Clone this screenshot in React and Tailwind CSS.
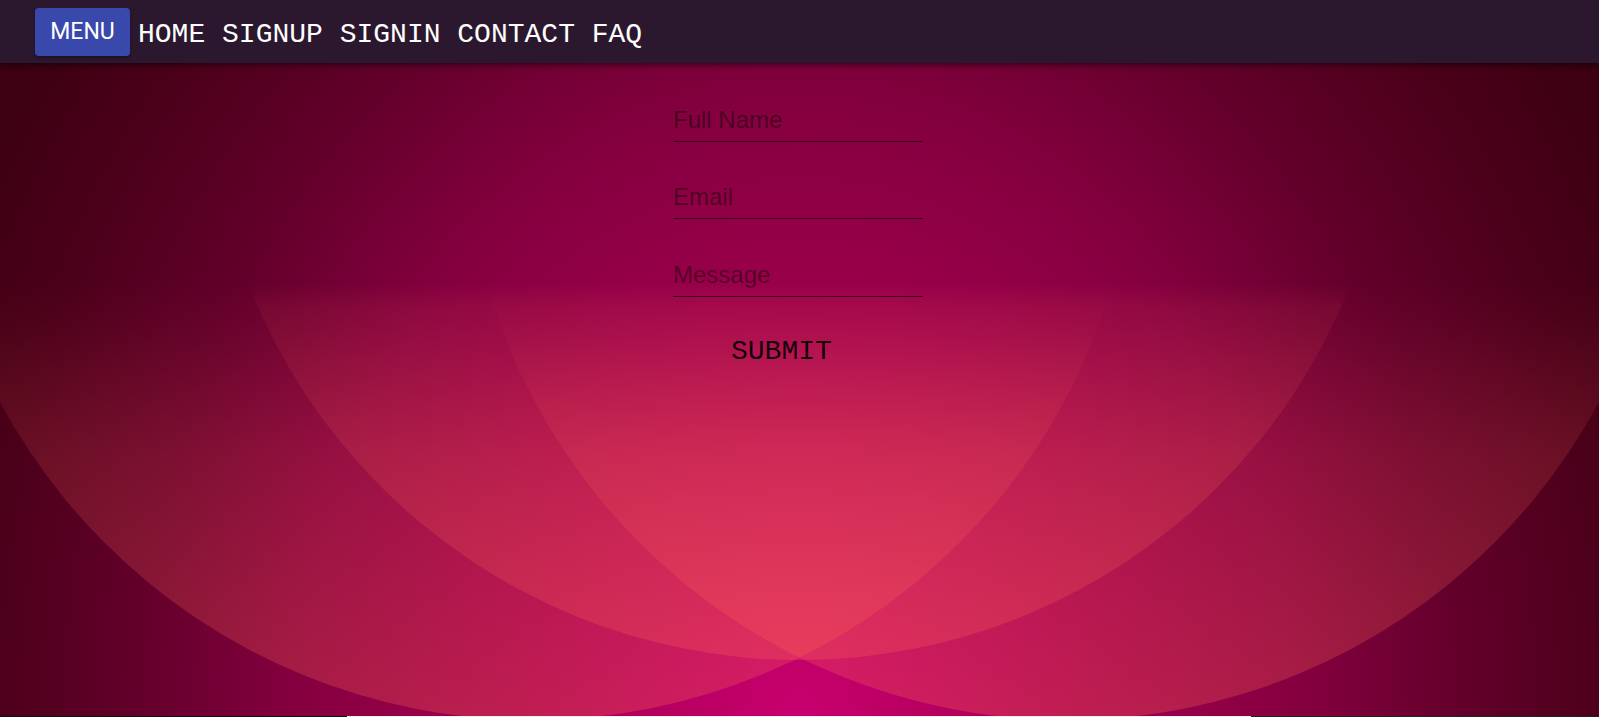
const links = ['HOME', 'SIGNUP', 'SIGNIN', 'CONTACT', 'FAQ'];

function Wallpaper() {
    return (
        <svg
            className="absolute inset-0 h-full w-full"
            viewBox="0 63 1599 653"
            preserveAspectRatio="none"
        >
            <defs>
                <radialGradient
                    id="base"
                    gradientUnits="userSpaceOnUse"
                    cx="0"
                    cy="0"
                    r="1"
                    gradientTransform="translate(799.5 717) scale(943 1150)"
                >
                    <stop offset="0" stopColor="#c8006e" />
                    <stop offset="0.313" stopColor="#a2004f" />
                    <stop offset="0.53" stopColor="#85003f" />
                    <stop offset="0.696" stopColor="#64002b" />
                    <stop offset="0.87" stopColor="#4a0019" />
                    <stop offset="1" stopColor="#3c0012" />
                </radialGradient>
                {/* middle circle fades in sharply, side circles softly */}
                <linearGradient id="glowMid" gradientUnits="userSpaceOnUse" x1="0" y1="285" x2="0" y2="717">
                    <stop offset="0" stopColor="#ff6455" stopOpacity="0" />
                    <stop offset="0.05" stopColor="#ff6455" stopOpacity="0.07" />
                    <stop offset="0.4" stopColor="#ff6455" stopOpacity="0.17" />
                    <stop offset="1" stopColor="#ff6455" stopOpacity="0.3" />
                </linearGradient>
                <linearGradient id="glowSide" gradientUnits="userSpaceOnUse" x1="0" y1="280" x2="0" y2="717">
                    <stop offset="0" stopColor="#ff6455" stopOpacity="0" />
                    <stop offset="0.1" stopColor="#ff6455" stopOpacity="0.03" />
                    <stop offset="0.4" stopColor="#ff6455" stopOpacity="0.16" />
                    <stop offset="1" stopColor="#ff6455" stopOpacity="0.3" />
                </linearGradient>
            </defs>
            <rect x="0" y="63" width="1599" height="653" fill="url(#base)" />
            <circle cx="532" cy="116" r="604" fill="url(#glowSide)" />
            <circle cx="1067" cy="116" r="604" fill="url(#glowSide)" />
            <circle cx="799.5" cy="68" r="592" fill="url(#glowMid)" />
        </svg>
    );
}

function Field({ placeholder, className = '' }) {
    return (
        <input
            type="text"
            placeholder={placeholder}
            className={`h-[43px] w-full border-0 border-b border-black/60 bg-transparent py-[7px] font-['Liberation_Sans',Arial,sans-serif] text-[24px] leading-[28px] text-black/80 outline-none placeholder:text-black/45 ${className}`}
        />
    );
}

export default function App() {
    return (
        <div className="flex h-[717px] flex-col overflow-hidden bg-black">
            {/* Top bar */}
            <header className="relative z-10 flex h-[63px] shrink-0 items-start bg-[#2b182f] shadow-[0_2px_6px_rgba(0,0,0,0.55)]">
                <button className="ml-[35px] mt-2 h-12 w-[95px] rounded bg-[#3949ab] font-['Roboto',Arial,sans-serif] text-[23px] text-white shadow-[0_2px_3px_rgba(0,0,0,0.35)]">
                    MENU
                </button>
                <nav className="ml-2 mt-[18px] whitespace-pre font-['Liberation_Mono','Courier_New',monospace] text-[28px] leading-[33px] text-white">
                    {links.map((link, i) => (
                        <span key={link}>
                            {i > 0 && ' '}
                            <a href="#">{link}</a>
                        </span>
                    ))}
                </nav>
            </header>

            {/* Contact form over wallpaper */}
            <main className="relative flex-1">
                <Wallpaper />
                <div className="relative flex justify-center pt-[36px]">
                    <form className="mr-[3px] flex w-[250px] flex-col" onSubmit={(e) => e.preventDefault()}>
                        <Field placeholder="Full Name" />
                        <Field placeholder="Email" className="mt-[34px]" />
                        <Field placeholder="Message" className="mt-[35px]" />
                        <button
                            type="submit"
                            className="ml-[58px] mt-[39px] self-start font-['Liberation_Mono','Courier_New',monospace] text-[28px] leading-[31px] text-black/90"
                        >
                            SUBMIT
                        </button>
                    </form>
                </div>
            </main>

            <div className="flex h-px shrink-0">
                <div className="w-[347px] bg-[#111]" />
                <div className="w-[904px] bg-[#eeeeee]" />
                <div className="flex-1 bg-[#222]" />
            </div>
        </div>
    );
}
